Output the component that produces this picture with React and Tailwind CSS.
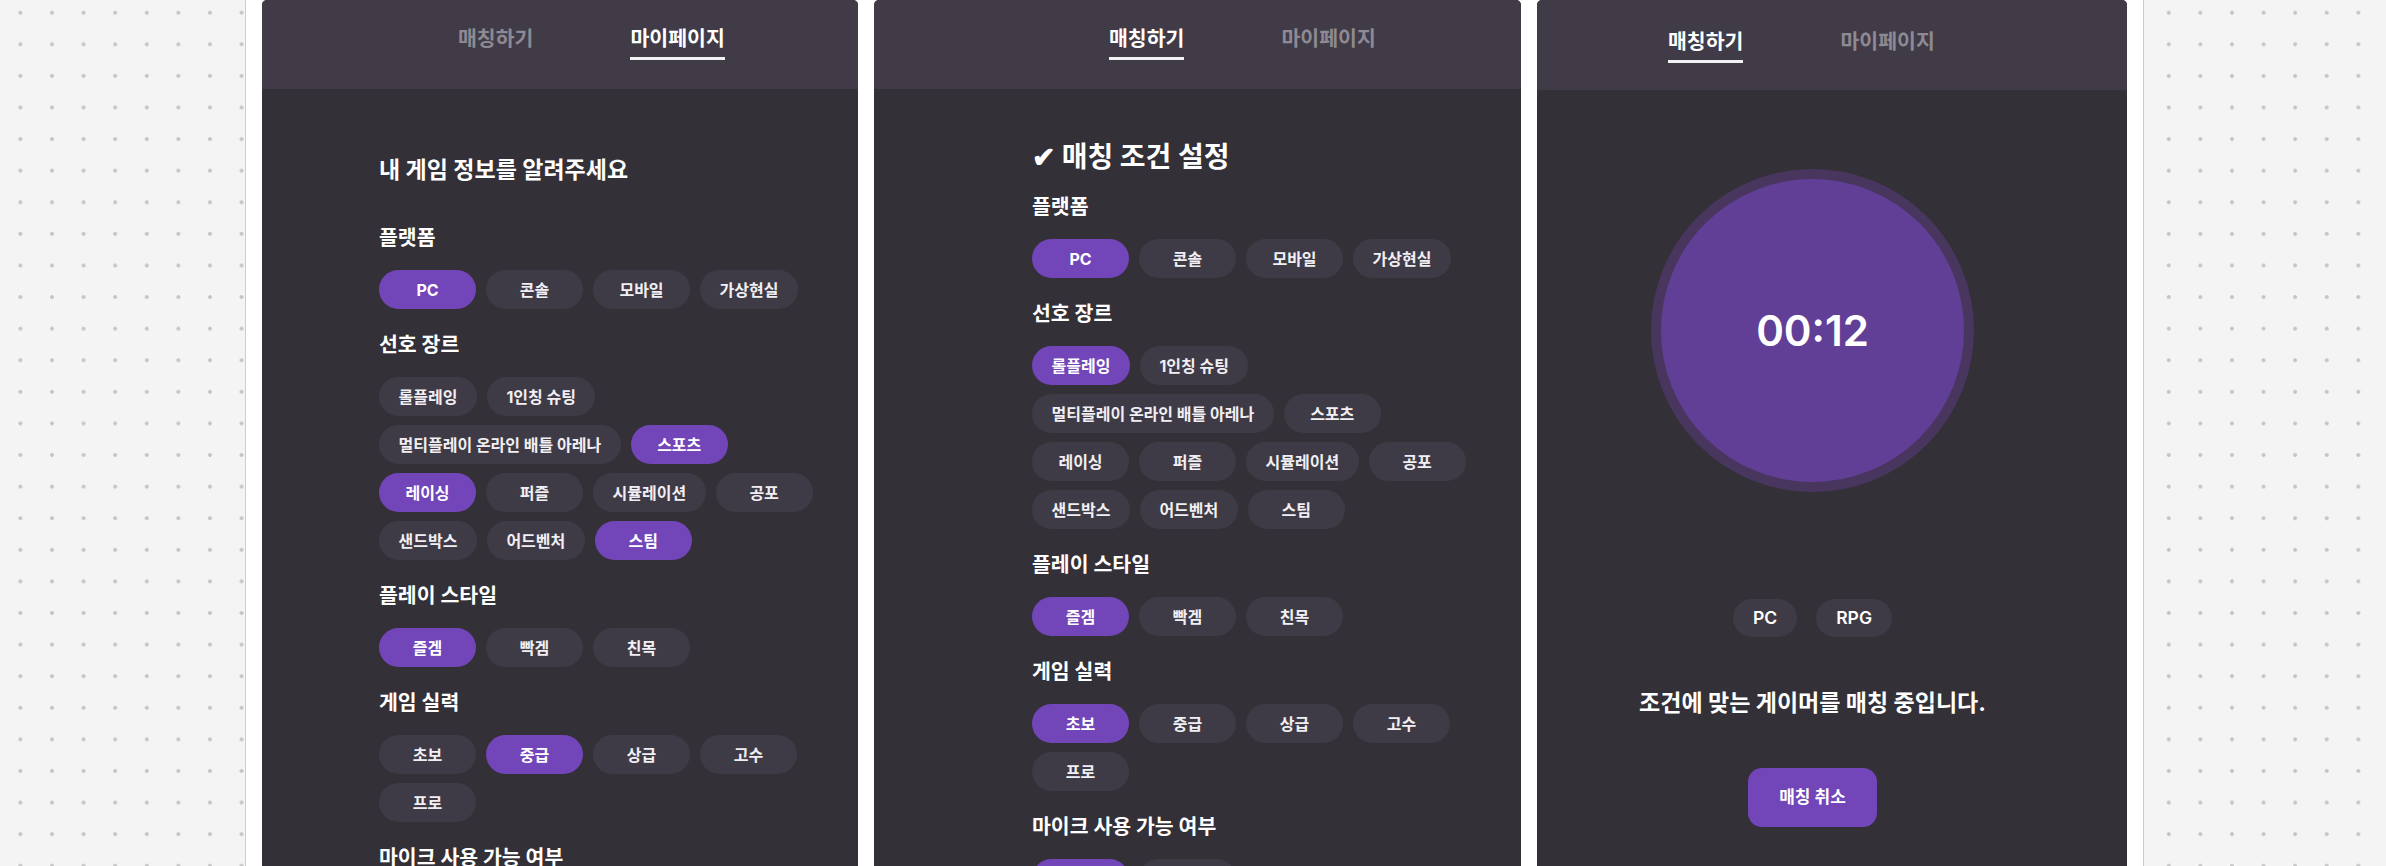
import React from "react";

function Chip({ label, on }) {
  return (
    <div
      className={
        on
          ? "h-[39px] min-w-[97px] px-[19.5px] rounded-full bg-[#7245b9] flex items-center justify-center text-[16px] font-bold text-white whitespace-nowrap"
          : "h-[39px] min-w-[97px] px-[19.5px] rounded-full bg-[#3f3b46] flex items-center justify-center text-[16px] font-bold text-[#f1eff3] whitespace-nowrap"
      }
    >
      {label}
    </div>
  );
}

function Section({ title, items, selected }) {
  return (
    <div className="flex flex-col">
      <div className="text-[20.5px] leading-[28px] font-bold text-white">{title}</div>
      <div className="mt-[18px] flex flex-wrap gap-x-[10px] gap-y-[9px]">
        {items.map((it) => (
          <Chip key={it} label={it} on={selected.includes(it)} />
        ))}
      </div>
    </div>
  );
}

function Tab({ label, active }) {
  return (
    <div className="flex flex-col">
      <span
        className={
          active
            ? "text-[20.5px] leading-[28px] font-bold text-white whitespace-nowrap"
            : "text-[20.5px] leading-[28px] font-bold text-[#8e8a93] whitespace-nowrap"
        }
      >
        {label}
      </span>
      <span className={active ? "mt-[4px] h-[3px] bg-[#f2f2f2]" : "mt-[4px] h-[3px]"} />
    </div>
  );
}

const GENRES = [
  "롤플레잉",
  "1인칭 슈팅",
  "멀티플레이 온라인 배틀 아레나",
  "스포츠",
  "레이싱",
  "퍼즐",
  "시뮬레이션",
  "공포",
  "샌드박스",
  "어드벤처",
  "스팀",
];

function Sections({ sel }) {
  return (
    <div className="flex flex-col gap-[22px]">
      <Section title="플랫폼" items={["PC", "콘솔", "모바일", "가상현실"]} selected={sel.platform} />
      <Section title="선호 장르" items={GENRES} selected={sel.genre} />
      <Section title="플레이 스타일" items={["즐겜", "빡겜", "친목"]} selected={sel.style} />
      <Section title="게임 실력" items={["초보", "중급", "상급", "고수", "프로"]} selected={sel.skill} />
      <Section title="마이크 사용 가능 여부" items={["가능", "불가능"]} selected={sel.mic} />
    </div>
  );
}

export default function App() {
  return (
    <div className="h-[866px] w-full overflow-hidden bg-[#f4f4f4] bg-[radial-gradient(circle,#c6c6c6_1.6px,transparent_2.2px)] bg-size-[31.6px_31.6px] bg-position-[4.6px_-3.1px] font-[Inter,'Noto_Sans_CJK_KR',sans-serif]">
      <div className="ml-[245px] w-[1899px] h-full bg-white border-x border-[#cdcdcd] px-4 flex gap-4">
        {/* Panel 1 - My page */}
        <div className="w-[596px] shrink-0 rounded-t-[5px] bg-[#333037] overflow-hidden flex flex-col">
          <div className="h-[89px] shrink-0 bg-[#403b47] pt-[25px] pl-[196px] flex gap-[97px]">
            <Tab label="매칭하기" />
            <Tab label="마이페이지" active />
          </div>
          <div className="pl-[117px] pt-[67px]">
            <div className="w-[446px]">
              <div className="text-[23px] leading-[28px] font-bold text-white whitespace-nowrap">내 게임 정보를 알려주세요</div>
              <div className="mt-[40px]">
                <Sections
                  sel={{
                    platform: ["PC"],
                    genre: ["스포츠", "레이싱", "스팀"],
                    style: ["즐겜"],
                    skill: ["중급"],
                    mic: ["가능"],
                  }}
                />
              </div>
            </div>
          </div>
        </div>

        {/* Panel 2 - Matching conditions */}
        <div className="w-[647px] shrink-0 rounded-t-[5px] bg-[#333037] overflow-hidden flex flex-col">
          <div className="h-[89px] shrink-0 bg-[#403b47] pt-[25px] pl-[235px] flex gap-[97px]">
            <Tab label="매칭하기" active />
            <Tab label="마이페이지" />
          </div>
          <div className="pl-[158px] pt-[50px]">
            <div className="w-[446px]">
              <div className="text-[28px] leading-[36px] font-bold text-white whitespace-nowrap">✔ 매칭 조건 설정</div>
              <div className="mt-[18px]">
                <Sections
                  sel={{
                    platform: ["PC"],
                    genre: ["롤플레잉"],
                    style: ["즐겜"],
                    skill: ["초보"],
                    mic: ["가능"],
                  }}
                />
              </div>
            </div>
          </div>
        </div>

        {/* Panel 3 - Matching in progress */}
        <div className="w-[590px] shrink-0 rounded-t-[5px] bg-[#333037] overflow-hidden flex flex-col">
          <div className="h-[90px] shrink-0 bg-[#403b47] pt-[28px] pl-[131px] flex gap-[97px]">
            <Tab label="매칭하기" active />
            <Tab label="마이페이지" />
          </div>
          <div className="pr-[39px] pt-[79px] flex flex-col items-center">
            <div className="w-[323px] h-[323px] rounded-full border-[10px] border-[#48365f] bg-[#623f97] flex items-center justify-center">
              <span className="text-[42px] leading-none font-semibold text-white">00:12</span>
            </div>
            <div className="mt-[107px] flex gap-[19px]">
              <div className="h-[38px] px-5 rounded-full bg-[#3f3b46] flex items-center text-[17.5px] font-semibold text-white">PC</div>
              <div className="h-[38px] px-5 rounded-full bg-[#3f3b46] flex items-center text-[17.5px] font-semibold text-white">RPG</div>
            </div>
            <div className="mt-[51px] text-[23px] leading-[30px] font-bold text-white whitespace-nowrap">조건에 맞는 게이머를 매칭 중입니다.</div>
            <button className="mt-[50px] h-[59px] px-[31px] rounded-[14px] bg-[#7245b9] text-[17px] font-bold text-white">
              매칭 취소
            </button>
          </div>
        </div>
      </div>
    </div>
  );
}
